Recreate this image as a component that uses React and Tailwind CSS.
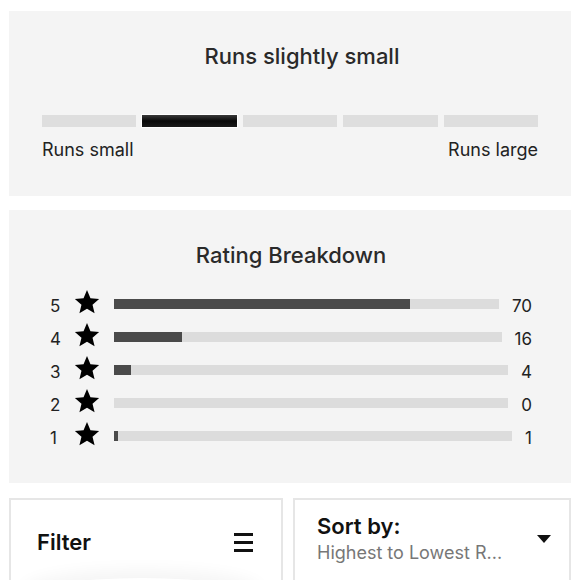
import React from "react";

const ratings = [
  { stars: 5, count: 70 },
  { stars: 4, count: 16 },
  { stars: 3, count: 4 },
  { stars: 2, count: 0 },
  { stars: 1, count: 1 },
];

const total = 91;

function Star() {
  return (
    <svg width="26" height="26" viewBox="0 0 24 24" className="shrink-0">
      <polygon
        points="12,1 15.2,8.5 23.2,9.2 17.1,14.5 19,22.4 12,18.2 5,22.4 6.9,14.5 0.8,9.2 8.8,8.5"
        fill="#000"
      />
    </svg>
  );
}

function FitMeter() {
  const segments = [0, 1, 2, 3, 4];
  const active = 1;
  return (
    <div className="bg-[#f4f4f4] px-[33px] pt-[31px] pb-[34px]">
      <h2 className="pl-[24px] text-center text-[22px] leading-[28px] font-medium text-[#2a2a2a]">
        Runs slightly small
      </h2>
      <div className="mt-[45px] flex gap-[6px]">
        {segments.map((s) => (
          <div
            key={s}
            className={
              s === active
                ? "h-[12px] flex-1 bg-gradient-to-b from-[#3a3a3a] via-[#0a0a0a] to-[#1a1a1a] ring-1 ring-white"
                : "h-[12px] flex-1 bg-[#dedede]"
            }
          />
        ))}
      </div>
      <div className="mt-[11px] flex justify-between text-[18px] leading-[24px] text-[#222]">
        <span>Runs small</span>
        <span>Runs large</span>
      </div>
    </div>
  );
}

function RatingBreakdown() {
  return (
    <div className="bg-[#f4f4f4] pl-[41px] pr-[39px] pt-[31px] pb-[31px]">
      <h2 className="text-center text-[22px] leading-[28px] font-medium text-[#2a2a2a]">
        Rating Breakdown
      </h2>
      <div className="mt-[18px] flex flex-col">
        {ratings.map((r) => (
          <div key={r.stars} className="flex h-[33px] items-center text-[17px] text-[#222]">
            <span className="w-[12px] pt-[6px]">{r.stars}</span>
            <span className="ml-[12px] -mt-[3px]">
              <Star />
            </span>
            <div className="ml-[14px] h-[10px] flex-1 bg-[#dcdcdc]">
              <div
                className="h-full bg-[#4a4a4a]"
                style={{ width: `${(r.count / total) * 100}%` }}
              />
            </div>
            <span className="ml-[13px] pt-[6px]">{r.count}</span>
          </div>
        ))}
      </div>
    </div>
  );
}

export default function App() {
  return (
    <div className="min-h-[580px] bg-white px-[9px] pt-[11px] font-['Inter','Liberation_Sans',sans-serif]">
      <FitMeter />
      <div className="mt-[14px]">
        <RatingBreakdown />
      </div>

      <div className="mt-[15px] grid grid-cols-[274px_1fr] gap-[10px]">
        <div className="relative h-[100px] overflow-hidden border-2 border-[#e6e6e6] bg-white">
          <div className="flex items-center justify-between pl-[26px] pr-[28px] pt-[26px]">
            <span className="text-[22px] font-semibold text-[#111]">Filter</span>
            <div className="flex w-[19px] flex-col gap-[5px]">
              <span className="h-[3px] bg-[#111]" />
              <span className="h-[3px] bg-[#111]" />
              <span className="h-[3px] bg-[#111]" />
            </div>
          </div>
          <div className="absolute left-[12px] right-[20px] top-[78px] h-[40px] rounded-[50%] bg-white shadow-[0_-8px_16px_rgba(0,0,0,0.045)]" />
        </div>
        <div className="h-[100px] border-2 border-[#e6e6e6] bg-white">
          <div className="flex items-center justify-between pl-[22px] pr-[18px] pt-[12px]">
            <div className="flex flex-col">
              <span className="text-[22px] leading-[28px] font-semibold text-[#111]">Sort by:</span>
              <span className="text-[18px] leading-[26px] text-[#777]">Highest to Lowest R...</span>
            </div>
            <svg width="14" height="9" viewBox="0 0 14 9">
              <polygon points="0,0 14,0 7,8" fill="#111" />
            </svg>
          </div>
        </div>
      </div>
    </div>
  );
}
